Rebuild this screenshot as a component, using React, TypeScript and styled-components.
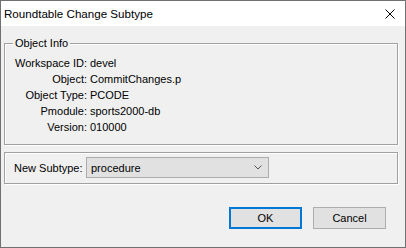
import React, { FC } from 'react';
import styled, { createGlobalStyle } from 'styled-components';

const GlobalStyle = createGlobalStyle`
  html, body {
    margin: 0;
    padding: 0;
    background: #f0f0f0;
  }
  * {
    box-sizing: border-box;
  }
`;

const Window = styled.div`
  width: 406px;
  height: 248px;
  border: 1px solid #707070;
  display: flex;
  flex-direction: column;
  background: #f0f0f0;
  font-family: 'Liberation Sans', Arial, sans-serif;
  font-size: 11px;
  color: #000;
`;

const TitleBar = styled.div`
  height: 25px;
  background: #fff;
  display: flex;
  align-items: center;
  justify-content: space-between;
  padding: 0 10px 0 3px;
`;

const Title = styled.span`
  font-size: 11.6px;
  line-height: 14px;
`;

const Body = styled.div`
  flex: 1;
  padding: 11px 7px 0 3px;
  display: flex;
  flex-direction: column;
`;

const Group = styled.fieldset<{ $pad: string; $gap?: number }>`
  margin: ${(p) => p.$gap ?? 0}px 0 0 0;
  padding: ${(p) => p.$pad};
  border: 1px solid #a0a0a0;
  box-shadow: 1px 1px 0 #fff, inset 1px 1px 0 #fff;
  min-width: 0;
`;

const Legend = styled.legend`
  padding: 0 2px;
  margin: 0;
  line-height: 13px;
  background: #f0f0f0;
`;

const InfoGrid = styled.div`
  display: grid;
  grid-template-columns: 74px auto;
  grid-auto-rows: 16px;
  column-gap: 3px;
  align-items: center;
`;

const Label = styled.span`
  text-align: right;
  white-space: nowrap;
`;

const Value = styled.span`
  white-space: nowrap;
`;

const SubtypeRow = styled.div`
  display: flex;
  align-items: center;
`;

const SubtypeLabel = styled.span`
  width: 72px;
  white-space: nowrap;
`;

const Combo = styled.div`
  width: 183px;
  height: 21px;
  border: 1px solid #adadad;
  background: #e1e1e1;
  display: flex;
  align-items: center;
  justify-content: space-between;
  padding: 0 6px 0 4px;
`;

const Buttons = styled.div`
  display: flex;
  justify-content: flex-end;
  gap: 11px;
  margin: 23px 12px 0 0;
`;

const Button = styled.button<{ $default?: boolean }>`
  width: 73px;
  height: 22px;
  padding: 0;
  font: inherit;
  color: #000;
  background: #e1e1e1;
  border: ${(p) => (p.$default ? '2px solid #0078d7' : '1px solid #adadad')};
`;

const CloseIcon: FC = () => (
  <svg width="10" height="10" viewBox="0 0 10 10">
    <path d="M0.5 0.5 L9.5 9.5 M9.5 0.5 L0.5 9.5" stroke="#000" strokeWidth="1" fill="none" />
  </svg>
);

const Chevron: FC = () => (
  <svg width="8" height="5" viewBox="0 0 8 5">
    <polyline points="0.5,0.5 4,4 7.5,0.5" stroke="#555" strokeWidth="1" fill="none" />
  </svg>
);

const info: [string, string][] = [
  ['Workspace ID:', 'devel'],
  ['Object:', 'CommitChanges.p'],
  ['Object Type:', 'PCODE'],
  ['Pmodule:', 'sports2000-db'],
  ['Version:', '010000'],
];

const App: FC = () => (
  <>
    <GlobalStyle />
    <Window>
      <TitleBar>
        <Title>Roundtable Change Subtype</Title>
        <CloseIcon />
      </TitleBar>
      <Body>
        <Group $pad="5px 8px 9px 8px">
          <Legend>Object Info</Legend>
          <InfoGrid>
            {info.map(([label, value]) => (
              <React.Fragment key={label}>
                <Label>{label}</Label>
                <Value>{value}</Value>
              </React.Fragment>
            ))}
          </InfoGrid>
        </Group>
        <Group $pad="4px 9px 5px 9px" $gap={7}>
          <SubtypeRow>
            <SubtypeLabel>New Subtype:</SubtypeLabel>
            <Combo>
              <span>procedure</span>
              <Chevron />
            </Combo>
          </SubtypeRow>
        </Group>
        <Buttons>
          <Button $default>OK</Button>
          <Button>Cancel</Button>
        </Buttons>
      </Body>
    </Window>
  </>
);

export default App;
